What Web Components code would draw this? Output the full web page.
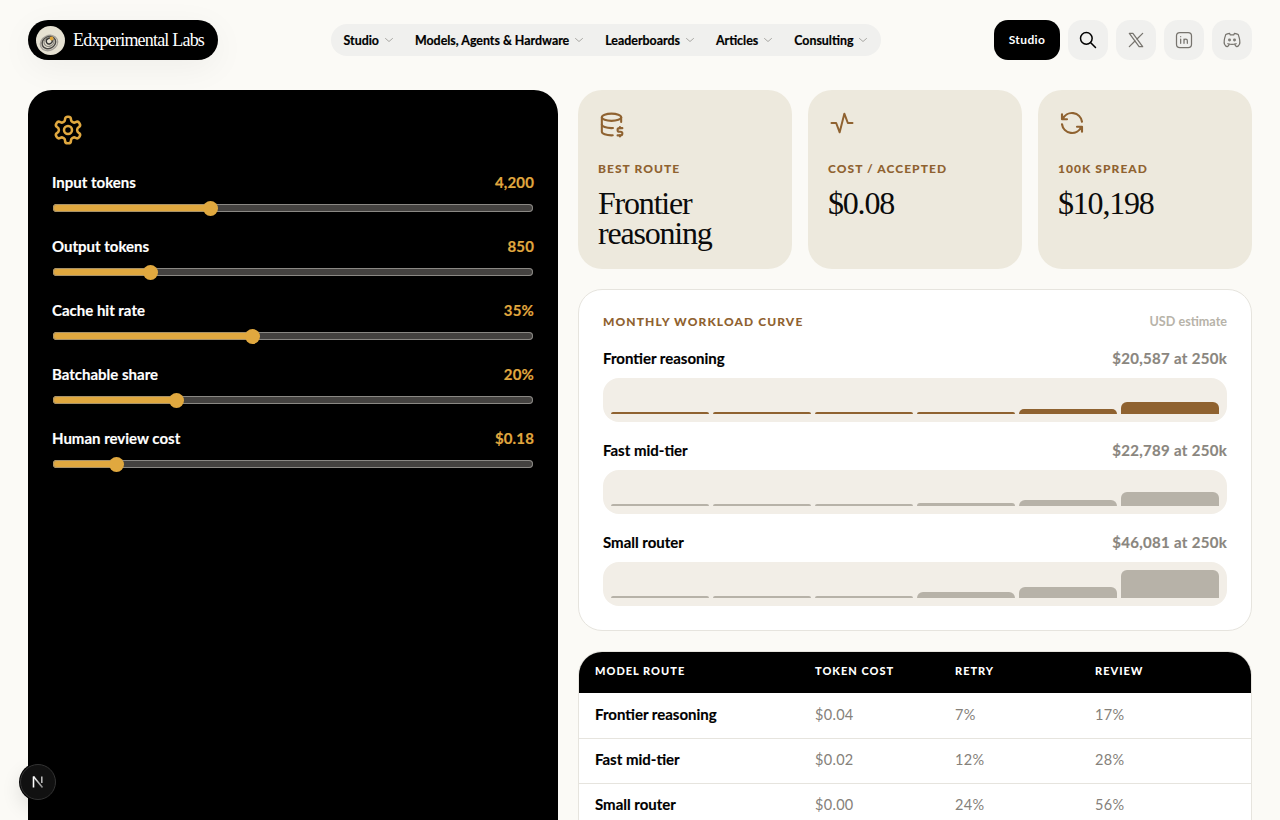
<!doctype html>
<html lang="en">
<head>
<meta charset="utf-8">
<title>Edxperimental Labs</title>
<style>
html,body{margin:0;height:820px;overflow:hidden;background:#fbfaf6}
body{font-family:Lato,"Noto Sans",sans-serif;color:#000;-webkit-font-smoothing:antialiased}
</style>
</head>
<body>
<x-app>
  <x-header slot="header">
    <x-logo slot="logo">Edxperimental Labs</x-logo>
    <x-nav slot="nav">
      <x-nav-item>Studio</x-nav-item>
      <x-nav-item>Models, Agents &amp; Hardware</x-nav-item>
      <x-nav-item>Leaderboards</x-nav-item>
      <x-nav-item>Articles</x-nav-item>
      <x-nav-item>Consulting</x-nav-item>
    </x-nav>
    <x-actions slot="actions">
      <x-studio-button>Studio</x-studio-button>
      <x-icon-button icon="search" dark></x-icon-button>
      <x-icon-button icon="x"></x-icon-button>
      <x-icon-button icon="linkedin"></x-icon-button>
      <x-icon-button icon="discord"></x-icon-button>
    </x-actions>
  </x-header>
  <x-controls slot="left">
    <x-slider label="Input tokens" value="4,200" pos="157"></x-slider>
    <x-slider label="Output tokens" value="850" pos="97"></x-slider>
    <x-slider label="Cache hit rate" value="35%" pos="199"></x-slider>
    <x-slider label="Batchable share" value="20%" pos="123"></x-slider>
    <x-slider label="Human review cost" value="$0.18" pos="63"></x-slider>
  </x-controls>
  <x-stats slot="right">
    <x-stat icon="dbdollar" label="Best route">Frontier reasoning</x-stat>
    <x-stat icon="activity" label="Cost / accepted">$0.08</x-stat>
    <x-stat icon="refresh" label="100k spread">$10,198</x-stat>
  </x-stats>
  <x-curve-card slot="right">
    <x-curve label="Frontier reasoning" value="$20,587 at 250k" color="#8f6230" bars="2,2,2,2,5,12"></x-curve>
    <x-curve label="Fast mid-tier" value="$22,789 at 250k" color="#b7b2a8" bars="2,2,2,3,6,14"></x-curve>
    <x-curve label="Small router" value="$46,081 at 250k" color="#b7b2a8" bars="2,2,2,6,11,28"></x-curve>
  </x-curve-card>
  <x-route-table slot="right">
    <x-route name="Frontier reasoning" a="$0.04" b="7%" c="17%"></x-route>
    <x-route name="Fast mid-tier" a="$0.02" b="12%" c="28%"></x-route>
    <x-route name="Small router" a="$0.00" b="24%" c="56%"></x-route>
  </x-route-table>
</x-app>
<x-dev-badge></x-dev-badge>
<script>
const ICONS={
 search:'<circle cx="10" cy="10" r="7"/><path d="M21 21l-6-6"/>',
 x:'<path d="M4 4l11.733 16h4.267l-11.733-16z"/><path d="M4 20l6.768-6.768m2.46-2.46l6.772-6.772"/>',
 linkedin:'<path d="M8 11v5M8 8v.01M12 16v-5M16 16v-3a2 2 0 1 0-4 0"/><path d="M3 7a4 4 0 0 1 4-4h10a4 4 0 0 1 4 4v10a4 4 0 0 1-4 4h-10a4 4 0 0 1-4-4z"/>',
 discord:'<path d="M8 12a1 1 0 1 0 2 0a1 1 0 0 0-2 0M14 12a1 1 0 1 0 2 0a1 1 0 0 0-2 0"/><path d="M15.5 17c0 1 1.5 3 2 3c1.5 0 2.833-1.667 3.5-3c.667-1.667 .5-5.833-1.5-11.5c-1.457-1.015-3-1.34-4.5-1.5l-.972 1.923a11.913 11.913 0 0 0-4.053 0l-.975-1.923c-1.5 .16-3.043 .485-4.5 1.5c-2 5.667-2.167 9.833-1.5 11.5c.667 1.333 2 3 3.5 3c.5 0 2-2 2-3"/><path d="M7 16.5c3.5 1 6.5 1 10 0"/>',
 dbdollar:'<path d="M4 6c0 1.657 3.582 3 8 3s8-1.343 8-3s-3.582-3-8-3s-8 1.343-8 3"/><path d="M4 6v6c0 1.657 3.582 3 8 3c.415 0 .822-.012 1.22-.035"/><path d="M20 10v-4"/><path d="M4 12v6c0 1.657 3.582 3 8 3c.352 0 .698-.009 1.037-.025"/><path d="M21 15h-2.5a1.5 1.5 0 0 0 0 3h1a1.5 1.5 0 0 1 0 3h-2.5"/><path d="M19 21v1m0-8v1"/>',
 activity:'<path d="M3 12h4l3 8l4-16l3 8h4"/>',
 refresh:'<path d="M20 11a8.1 8.1 0 0 0-15.5-2m-.5-4v4h4"/><path d="M4 13a8.1 8.1 0 0 0 15.5 2m.5 4v-4h-4"/>',
 gear:'<path d="M12.22 2h-.44a2 2 0 0 0-2 2v.18a2 2 0 0 1-1 1.73l-.43.25a2 2 0 0 1-2 0l-.15-.08a2 2 0 0 0-2.73.73l-.22.38a2 2 0 0 0 .73 2.73l.15.1a2 2 0 0 1 1 1.72v.51a2 2 0 0 1-1 1.74l-.15.09a2 2 0 0 0-.73 2.73l.22.38a2 2 0 0 0 2.73.73l.15-.08a2 2 0 0 1 2 0l.43.25a2 2 0 0 1 1 1.73V20a2 2 0 0 0 2 2h.44a2 2 0 0 0 2-2v-.18a2 2 0 0 1 1-1.73l.43-.25a2 2 0 0 1 2 0l.15.08a2 2 0 0 0 2.73-.73l.22-.39a2 2 0 0 0-.73-2.73l-.15-.08a2 2 0 0 1-1-1.74v-.5a2 2 0 0 1 1-1.74l.15-.09a2 2 0 0 0 .73-2.73l-.22-.38a2 2 0 0 0-2.73-.73l-.15.08a2 2 0 0 1-2 0l-.43-.25a2 2 0 0 1-1-1.73V4a2 2 0 0 0-2-2z"/><circle cx="12" cy="12" r="3"/>'
};
const svg=(n,size,sw,color,extra='')=>`<svg width="${size}" height="${size}" viewBox="0 0 24 24" fill="none" stroke="${color}" stroke-width="${sw}" stroke-linecap="round" stroke-linejoin="round" style="display:block;${extra}">${ICONS[n]}</svg>`;
const esc=s=>String(s).replace(/&/g,'&amp;').replace(/</g,'&lt;');
function def(name,render){
  customElements.define(name,class extends HTMLElement{
    constructor(){super();this.attachShadow({mode:'open'})}
    connectedCallback(){this.shadowRoot.innerHTML=render(this)}
  });
}
def('x-app',()=>`<style>
:host{display:block;padding:20px 28px 0;box-sizing:border-box;height:820px;overflow:hidden}
.main{display:grid;grid-template-columns:530px 674px;column-gap:20px;margin-top:30px;align-items:start}
.right{display:flex;flex-direction:column;gap:20px}
</style><slot name="header"></slot><div class="main"><slot name="left"></slot><div class="right"><slot name="right"></slot></div></div>`);
def('x-header',()=>`<style>:host{display:flex;justify-content:space-between;align-items:center;height:40px}</style><slot name="logo"></slot><slot name="nav"></slot><slot name="actions"></slot>`);
def('x-logo',()=>`<style>
:host{display:flex;align-items:center;box-sizing:border-box;width:190px;height:40px;background:#000;border-radius:20px;padding-left:8px;gap:8px;color:#fff;box-shadow:0 8px 34px rgba(0,0,0,.05);
font:400 18px/1 "Liberation Serif",serif;letter-spacing:-.8px;white-space:nowrap}
svg{flex:none;display:block}
</style><svg width="29" height="29" viewBox="0 0 29 29"><circle cx="14.5" cy="14.5" r="14.5" fill="#e6e1d2"/><g fill="none" transform="rotate(-25 13 17)"><ellipse cx="13" cy="17" rx="9" ry="7.4" stroke="#a5a19a" stroke-width="1.3"/><ellipse cx="13" cy="16.6" rx="7" ry="5.8" stroke="#4a4845" stroke-width="1.5"/><ellipse cx="13.4" cy="16" rx="5" ry="4.3" stroke="#8b8880" stroke-width="1.3"/><ellipse cx="14" cy="15.4" rx="3" ry="2.7" stroke="#333" stroke-width="1.3"/></g><circle cx="15.6" cy="12.5" r="1.9" fill="#dfa53a"/></svg><slot></slot>`);
def('x-nav',()=>`<style>:host{display:flex;align-items:center;gap:21px;box-sizing:border-box;height:32px;padding:0 13px;border-radius:16px;background:#f0f0ee}</style><slot></slot>`);
def('x-nav-item',()=>`<style>
:host{display:flex;align-items:center;gap:5px;font:700 12.4px/16px Lato,sans-serif;-webkit-text-stroke:.2px #000;color:#000;white-space:nowrap;padding-top:1px}
svg{display:block;margin-top:-1px}
</style><slot></slot><svg width="10" height="10" viewBox="0 0 10 10" fill="none" stroke="#a9a8a4" stroke-width="1" stroke-linecap="round" stroke-linejoin="round"><path d="M1.5 3.5L5 6.5L8.5 3.5"/></svg>`);
def('x-actions',()=>`<style>:host{display:flex;gap:8px}</style><slot></slot>`);
def('x-studio-button',()=>`<style>:host{display:flex;align-items:center;justify-content:center;width:66px;height:40px;border-radius:14px;background:#000;color:#fff;font:700 12px/1 Lato,sans-serif;letter-spacing:.4px}</style><slot></slot>`);
def('x-icon-button',el=>`<style>:host{display:flex;align-items:center;justify-content:center;width:40px;height:40px;border-radius:14px;background:#f0f0ee}</style>${svg(el.getAttribute('icon'),20,el.hasAttribute('dark')?1.8:1.5,el.hasAttribute('dark')?'#000':'#77746e')}`);
def('x-controls',()=>`<style>
:host{display:block;box-sizing:border-box;background:#000;border-radius:24px 24px 0 0;height:760px;padding:24px}
.list{display:flex;flex-direction:column;gap:24px;margin-top:26px}
</style>${svg('gear',32,1.9,'#e0a83f')}<div class="list"><slot></slot></div>`);
def('x-slider',el=>`<style>
:host{display:block;height:40px}
.row{display:flex;justify-content:space-between;align-items:center;height:20px;font:700 15px/20px Lato,sans-serif;-webkit-text-stroke:.15px;color:#fff;margin-bottom:12px}
.v{color:#e0a83f;letter-spacing:.15px}
.track{position:relative;height:8px;margin:0 1px;border-radius:4px;background:#444240;box-shadow:inset 0 0 0 1px #8a8884}
.fill{height:100%;border-radius:4px;background:#e0a83f;box-shadow:inset 0 0 0 1px #a89268}
.thumb{position:absolute;top:-3.5px;width:15px;height:15px;margin-left:-7.5px;border-radius:50%;background:#e0a83f}
</style><div class="row"><span>${esc(el.getAttribute('label'))}</span><span class="v">${esc(el.getAttribute('value'))}</span></div>
<div class="track"><div class="fill" style="width:${el.getAttribute('pos')}px"></div><div class="thumb" style="left:${el.getAttribute('pos')}px"></div></div>`);
def('x-stats',()=>`<style>:host{display:grid;grid-template-columns:repeat(3,214px);column-gap:16px}</style><slot></slot>`);
def('x-stat',el=>{
 const n=el.getAttribute('icon');
 const c={dbdollar:[29,-1,-.5],activity:[28,-.5,-1],refresh:[30,-1.5,-2]}[n];
 return `<style>
:host{display:block;box-sizing:border-box;height:179px;border-radius:24px;background:#ede9dd;padding:20px}
.ic{display:flow-root;height:28px;margin-bottom:23px}
.l{font:900 12px/16px Lato,sans-serif;letter-spacing:1.05px;text-transform:uppercase;color:#8f6230}
.v{font:400 32px/30px "Liberation Serif",serif;letter-spacing:-1.2px;color:#0b0b0b;margin-top:11px;width:150px}
</style><div class="ic">${svg(n,c[0],1.7,'#8f6230',`margin:${c[2]}px 0 0 ${c[1]}px`)}</div><div class="l">${esc(el.getAttribute('label'))}</div><div class="v"><slot></slot></div>`});
def('x-curve-card',()=>`<style>
:host{display:block;box-sizing:border-box;height:342px;background:#fff;border:1px solid #e6e4de;border-radius:24px;padding:24px}
.h{display:flex;justify-content:space-between;align-items:center;height:16px;margin-bottom:19px;font:900 12px/16px Lato,sans-serif}
.t{color:#8f6230;letter-spacing:1.1px}
.u{color:#b7b3a9;font-weight:700;font-size:12.6px}
.list{display:flex;flex-direction:column;gap:19px}
</style><div class="h"><span class="t">MONTHLY WORKLOAD CURVE</span><span class="u">USD estimate</span></div><div class="list"><slot></slot></div>`);
def('x-curve',el=>{
 const bars=el.getAttribute('bars').split(',').map(h=>`<i style="height:${h}px;background:${el.getAttribute('color')}"></i>`).join('');
 return `<style>
:host{display:block}
.row{display:flex;justify-content:space-between;align-items:center;height:19px;margin-bottom:10px;font:700 15px/19px Lato,sans-serif;-webkit-text-stroke:.15px;color:#000}
.v{color:#8a867e;letter-spacing:.3px}
.track{display:grid;grid-template-columns:repeat(6,1fr);column-gap:4px;align-items:end;box-sizing:border-box;height:44px;padding:8px;border-radius:16px;background:#f2eee7}
i{display:block;border-radius:6px 6px 0 0}
</style><div class="row"><span>${esc(el.getAttribute('label'))}</span><span class="v">${esc(el.getAttribute('value'))}</span></div><div class="track">${bars}</div>`});
def('x-route-table',()=>`<style>
:host{display:block;background:#fff;border:1px solid #e6e4de;border-radius:24px 24px 0 0;overflow:hidden}
.h{display:grid;grid-template-columns:220px 140px 140px 1fr;align-items:center;box-sizing:border-box;height:41px;padding:0 0 3px 16px;background:#000;color:#fff;font:900 11px/16px Lato,sans-serif;letter-spacing:1px}
</style><div class="h"><span>MODEL ROUTE</span><span>TOKEN COST</span><span>RETRY</span><span>REVIEW</span></div><slot></slot>`);
def('x-route',el=>`<style>
:host{display:grid;grid-template-columns:220px 140px 140px 1fr;align-items:center;box-sizing:border-box;height:45px;padding:0 0 1px 16px;font:400 14.5px/20px Lato,sans-serif;color:#85817a;letter-spacing:.3px}
:host(:not(:first-child)){border-top:1px solid #e6e4de;padding-bottom:2px}
b{font-weight:700;font-size:15px;color:#000;letter-spacing:0;-webkit-text-stroke:.15px;padding-bottom:2px}
</style><b>${esc(el.getAttribute('name'))}</b><span>${el.getAttribute('a')}</span><span>${el.getAttribute('b')}</span><span>${el.getAttribute('c')}</span>`);
def('x-dev-badge',()=>`<style>
:host{position:fixed;left:20px;top:764px;width:36px;height:36px;box-sizing:border-box;border-radius:50%;background:#111;border:1px solid #333;box-shadow:0 0 0 1px #000,0 8px 20px rgba(0,0,0,.12);display:flex;align-items:center;justify-content:center}
</style><svg width="14" height="14" viewBox="0 0 14 14" fill="none" stroke-width="1.6"><defs><linearGradient id="g" x1="0" y1="0" x2="1" y2="1"><stop offset="0" stop-color="#fff"/><stop offset="1" stop-color="#888"/></linearGradient></defs><path d="M2.5 12.5V1.5" stroke="#fff"/><path d="M2.5 1.5L11.5 12.5" stroke="url(#g)"/><path d="M10.8 1.5V8" stroke="#bbb"/></svg>`);
</script>
</body>
</html>
